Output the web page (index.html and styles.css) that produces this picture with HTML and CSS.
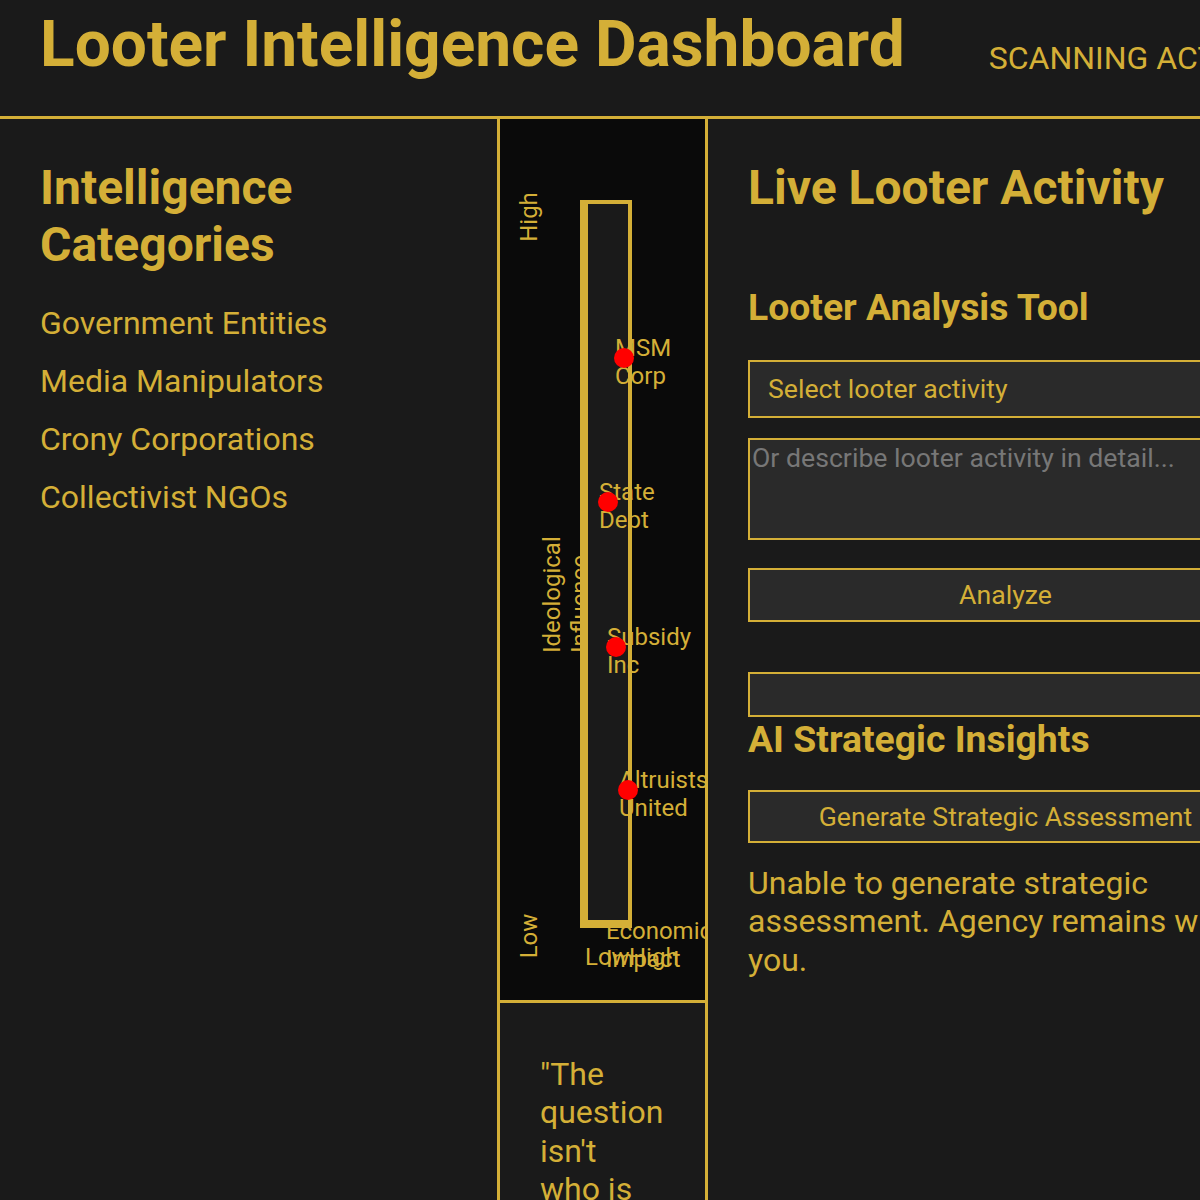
FILE: index.html
```html
<!DOCTYPE html>
<html lang="en">
<head>
<meta charset="utf-8">
<title>Looter Intelligence Dashboard</title>
<link rel="stylesheet" href="styles.css">
</head>
<body>
<header class="topbar">
  <h1 class="title">Looter Intelligence Dashboard</h1>
  <div class="status">SCANNING ACTIVE</div>
</header>
<main class="layout">
  <aside class="categories">
    <h2 class="panel-title">Intelligence Categories</h2>
    <ul class="category-list">
      <li>Government Entities</li>
      <li>Media Manipulators</li>
      <li>Crony Corporations</li>
      <li>Collectivist NGOs</li>
    </ul>
  </aside>
  <section class="middle">
    <div class="chart">
      <div class="axis-label y-high">High</div>
      <div class="axis-label y-low">Low</div>
      <div class="axis-title y-title">Ideological Influence</div>
      <div class="plot"></div>
      <div class="axis-title x-title">Economic Impact</div>
      <div class="axis-label x-low">Low</div>
      <div class="axis-label x-high">High</div>
      <div class="point p-msm"><span class="dot"></span><span class="point-label">MSM Corp</span></div>
      <div class="point p-state"><span class="dot"></span><span class="point-label">State Dept</span></div>
      <div class="point p-subsidy"><span class="dot"></span><span class="point-label">Subsidy Inc</span></div>
      <div class="point p-altruists"><span class="dot"></span><span class="point-label">Altruists United</span></div>
    </div>
    <blockquote class="quote">"The question isn't who is going to let me; it's who is going to stop me."</blockquote>
  </section>
  <section class="activity">
    <h2 class="panel-title">Live Looter Activity</h2>
    <h3 class="tool-title">Looter Analysis Tool</h3>
    <select class="field select">
      <option>Select looter activity</option>
    </select>
    <textarea class="field textarea" placeholder="Or describe looter activity in detail..."></textarea>
    <button class="btn analyze">Analyze</button>
    <div class="result"></div>
    <h3 class="insights-title">AI Strategic Insights</h3>
    <button class="btn generate">Generate Strategic Assessment</button>
    <p class="insight-text">Unable to generate strategic assessment. Agency remains with you.</p>
  </section>
</main>
</body>
</html>
```
FILE: styles.css
```css
html, body {
  margin: 0;
  padding: 0;
  overflow: hidden;
}
body {
  background: #1a1a1a;
  color: #d4af37;
  font-family: Roboto, "Noto Sans", sans-serif;
  min-width: 1303px;
}
.topbar {
  display: flex;
  align-items: flex-start;
  height: 116px;
  padding: 0 40px;
  border-bottom: 3px solid #d4af37;
  white-space: nowrap;
}
.title {
  margin: 7px 0 0;
  font-size: 64px;
  font-weight: 700;
  line-height: normal;
}
.status {
  margin: 39px 0 0 84px;
  font-size: 32px;
  line-height: normal;
}
.layout {
  display: grid;
  grid-template-columns: 500px 208px 595px;
  min-height: 1100px;
}
.categories {
  border-right: 3px solid #d4af37;
  padding: 40px;
}
.panel-title {
  margin: 0;
  font-size: 48px;
  font-weight: 700;
  line-height: normal;
}
.category-list {
  list-style: none;
  margin: 21px 0 0;
  padding: 0;
}
.category-list li {
  font-size: 32px;
  line-height: normal;
  padding: 10px 0;
}
.middle {
  border-right: 3px solid #d4af37;
  display: flex;
  flex-direction: column;
  overflow: hidden;
}
.chart {
  position: relative;
  height: 881px;
  background: #0a0a0a;
  overflow: hidden;
  font-size: 24px;
  line-height: 28px;
}
.axis-label, .axis-title, .point, .point-label {
  position: absolute;
}
.y-high {
  left: 29px;
  top: 98px;
  transform: translate(-50%, -50%) rotate(-90deg);
}
.y-low {
  left: 29px;
  top: 817px;
  transform: translate(-50%, -50%) rotate(-90deg);
}
.y-title {
  width: 118px;
  left: 7px;
  top: 447px;
  transform: rotate(-90deg);
}
.plot {
  position: absolute;
  left: 80px;
  top: 81px;
  width: 52px;
  height: 728px;
  box-sizing: border-box;
  background: #1a1a1a;
  border-style: solid;
  border-color: #d4af37;
  border-width: 4px 4px 8px 8px;
}
.x-title {
  left: 106px;
  top: 798px;
}
.x-low {
  left: 85px;
  top: 824px;
}
.x-high {
  left: 129px;
  top: 824px;
}
.dot {
  position: absolute;
  left: 0;
  top: 0;
  width: 20px;
  height: 20px;
  border-radius: 50%;
  background: #ff0000;
  z-index: 2;
}
.point-label {
  left: 1px;
  top: -14px;
  width: 90px;
}
.p-msm { left: 114px; top: 229px; }
.p-state { left: 98px; top: 373px; }
.p-subsidy { left: 106px; top: 518px; }
.p-altruists { left: 118px; top: 661px; }
.p-altruists .point-label { width: 86px; }
.quote {
  margin: 0;
  border-top: 3px solid #d4af37;
  padding: 52px 42px 40px 40px;
  font-size: 32px;
  line-height: 1.2;
  flex: 1;
}
.activity {
  padding: 40px;
  display: flex;
  flex-direction: column;
  align-items: stretch;
}
.tool-title, .insights-title {
  margin: 0;
  font-size: 37.33px;
  font-weight: 700;
  line-height: normal;
}
.tool-title {
  margin-top: 69px;
}
.field, .btn {
  box-sizing: border-box;
  width: 100%;
  background: #2a2a2a;
  color: #d4af37;
  border: 2px solid #d4af37;
  border-radius: 0;
  font-family: Roboto, "Noto Sans", sans-serif;
  font-size: 26.67px;
}
.select {
  appearance: none;
  -webkit-appearance: none;
  height: 58px;
  margin-top: 31px;
  padding: 0 18px;
}
.textarea {
  height: 102px;
  margin-top: 20px;
  padding: 2px;
  resize: none;
  line-height: normal;
}
.textarea::placeholder {
  color: #777777;
}
.analyze {
  height: 54px;
  margin-top: 28px;
}
.result {
  height: 45px;
  margin-top: 50px;
  box-sizing: border-box;
  background: #2a2a2a;
  border: 2px solid #d4af37;
}
.generate {
  height: 53px;
  margin-top: 29px;
}
.insight-text {
  margin: 21px 0 0;
  font-size: 32px;
  line-height: 1.2;
}
```
